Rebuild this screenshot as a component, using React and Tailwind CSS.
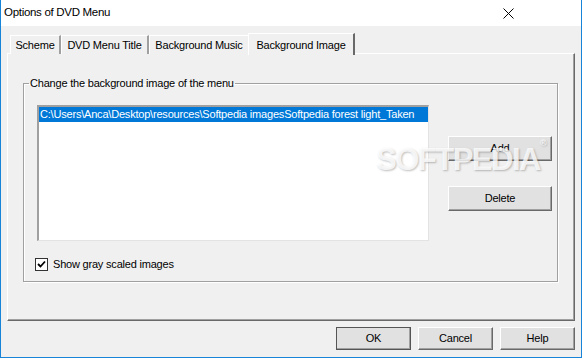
import { useState } from 'react'

const font = { fontFamily: '"Liberation Sans", Arial, sans-serif' }

// classic raised button
function Btn({ children, className = '', isDefault = false }) {
  return (
    <button
      className={`flex items-center justify-center bg-[#e1e1e1] text-[11px] text-black border ${
        isDefault ? 'border-[#555]' : 'border-t-white border-l-white border-b-[#696969] border-r-[#696969]'
      } shadow-[inset_-1px_-1px_0_#a0a0a0] ${className}`}
    >
      {children}
    </button>
  )
}

function Tab({ label, width, active }) {
  if (active) {
    return (
      <div
        className={`h-[22px] -ml-[2px] flex items-start justify-center pt-[3px] bg-[#f0f0f0] border-t border-l border-t-white border-l-white border-r-2 border-r-[#696969] relative z-10 ${width}`}
      >
        {label}
      </div>
    )
  }
  return (
    <div
      className={`h-[19px] mt-[2px] flex items-center justify-center bg-[#f0f0f0] border-t border-l border-t-white border-l-white border-r-2 border-r-[#a0a0a0] ${width}`}
    >
      {label}
    </div>
  )
}

export default function App() {
  const [gray, setGray] = useState(true)

  return (
    <div style={font} className="w-[582px] h-[358px] bg-[#f0f0f0] border-l border-r border-b border-[#1883d7] flex flex-col text-black text-[11px] tracking-[-0.2px] overflow-hidden">
      {/* title bar */}
      <div className="h-[26px] bg-white flex items-center justify-between pl-[3px] pr-[67px] shrink-0">
        <span className="text-[11.5px] tracking-[-0.3px]">Options of DVD Menu</span>
        <svg width="11" height="11" viewBox="0 0 11 11">
          <path d="M0.5 0.5 L10.5 10.5 M10.5 0.5 L0.5 10.5" stroke="#000" strokeWidth="1" />
        </svg>
      </div>

      {/* tabs */}
      <div className="flex items-start pl-[9px] mt-[7px] h-[21px] relative z-10">
        <Tab label="Scheme" width="w-[51px]" />
        <Tab label="DVD Menu Title" width="w-[88px]" />
        <Tab label="Background Music" width="w-[101px]" />
        <Tab label="Background Image" width="w-[107px]" active />
      </div>

      {/* tab panel */}
      <div className="ml-[6px] mr-[6px] -mt-[1px] h-[268px] border-t border-l border-t-white border-l-white border-r border-b border-r-[#696969] border-b-[#696969] shadow-[inset_-1px_-1px_0_#a0a0a0] relative">
        {/* watermark */}
        <div className="absolute left-[368px] top-[83px] text-[31px] font-bold tracking-[-1.5px] text-white/80 [text-shadow:1px_1px_2px_rgba(0,0,0,0.25)] pointer-events-none z-20 select-none">
          SOFTPEDIA<span className="text-[9px] align-top">®</span>
        </div>

        <fieldset className="mt-[23px] ml-[15px] mr-[16px] h-[205px] border border-[#a0a0a0] shadow-[1px_1px_0_white,inset_1px_1px_0_white]">
          <legend className="px-[1px] ml-[5px] leading-[13px]">Change the background image of the menu</legend>
          <div className="flex mt-[15px] pl-[13px]">
            {/* list box */}
            <div className="w-[392px] h-[136px] bg-white border-t-2 border-l-2 border-t-[#a0a0a0] border-l-[#a0a0a0] border-b border-r border-b-[#e3e3e3] border-r-[#e3e3e3] overflow-hidden">
              <div className="h-[15px] bg-[#0078d7] text-white leading-[15px] whitespace-nowrap overflow-hidden pl-[1px]">
                C:\Users\Anca\Desktop\resources\Softpedia imagesSoftpedia forest light_Taken
              </div>
            </div>
            <div className="flex flex-col ml-[19px] mt-[31px] gap-[25px]">
              <Btn className="w-[104px] h-[25px]">Add</Btn>
              <Btn className="w-[104px] h-[25px]">Delete</Btn>
            </div>
          </div>
          <label className="flex items-center mt-[15px] pl-[11px] gap-[5px]" onClick={() => setGray(!gray)}>
            <span className="w-[13px] h-[13px] bg-white border border-[#333] flex items-center justify-center">
              {gray && (
                <svg width="9" height="9" viewBox="0 0 9 9">
                  <path d="M1 4 L3.5 6.5 L8 1.5" fill="none" stroke="#000" strokeWidth="1.8" />
                </svg>
              )}
            </span>
            <span>Show gray scaled images</span>
          </label>
        </fieldset>
      </div>

      {/* dialog buttons */}
      <div className="flex justify-end gap-[7px] pr-[6px] mt-[6px]">
        <Btn className="w-[75px] h-[23px]" isDefault>OK</Btn>
        <Btn className="w-[75px] h-[23px]">Cancel</Btn>
        <Btn className="w-[75px] h-[23px]">Help</Btn>
      </div>
    </div>
  )
}
